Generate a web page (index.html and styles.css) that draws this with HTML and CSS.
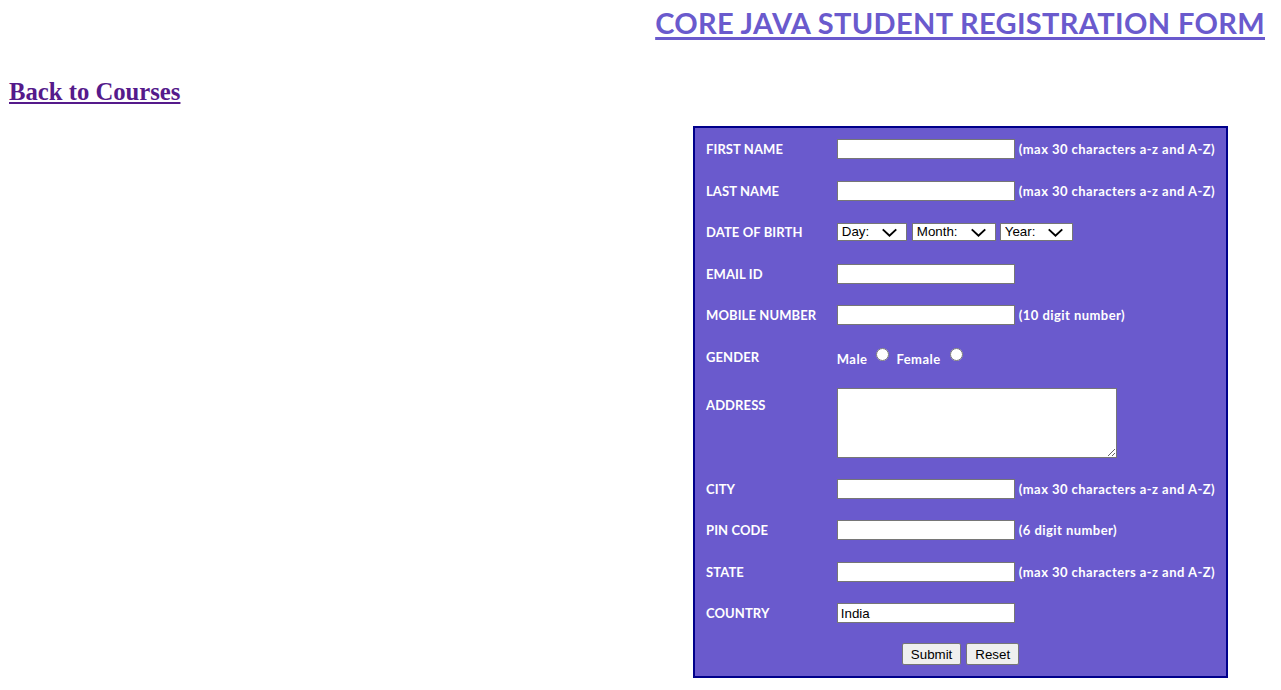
FILE: index.html
```html
<!DOCTYPE html>
<html lang="en">
<head>
<meta charset="utf-8">
<title>Core Java Student Registration Form</title>
<link rel="stylesheet" href="styles.css">
</head>
<body>
<h1 class="title"><a href="#" class="title-link">CORE JAVA STUDENT REGISTRATION FORM</a></h1>
<div class="main">
  <div class="left">
    <h2 class="back"><a href="#" class="back-link">Back to Courses</a></h2>
  </div>
  <div class="right">
    <form class="reg">
      <table class="reg-table">
        <tr>
          <td class="lbl">FIRST NAME</td>
          <td class="fld"><input type="text" class="txt"> <span class="note">(max 30 characters a-z and A-Z)</span></td>
        </tr>
        <tr>
          <td class="lbl">LAST NAME</td>
          <td class="fld"><input type="text" class="txt"> <span class="note">(max 30 characters a-z and A-Z)</span></td>
        </tr>
        <tr>
          <td class="lbl">DATE OF BIRTH</td>
          <td class="fld">
            <select class="sel sel-day"><option>Day:</option></select>
            <select class="sel sel-month"><option>Month:</option></select>
            <select class="sel sel-year"><option>Year:</option></select>
          </td>
        </tr>
        <tr>
          <td class="lbl">EMAIL ID</td>
          <td class="fld"><input type="text" class="txt"></td>
        </tr>
        <tr>
          <td class="lbl">MOBILE NUMBER</td>
          <td class="fld"><input type="text" class="txt"> <span class="note">(10 digit number)</span></td>
        </tr>
        <tr>
          <td class="lbl">GENDER</td>
          <td class="fld gender"><span class="note">Male</span> <input type="radio" name="g" class="rad"> <span class="note">Female</span> <input type="radio" name="g" class="rad"></td>
        </tr>
        <tr>
          <td class="lbl lbl-top">ADDRESS</td>
          <td class="fld"><textarea class="area"></textarea></td>
        </tr>
        <tr>
          <td class="lbl">CITY</td>
          <td class="fld"><input type="text" class="txt"> <span class="note">(max 30 characters a-z and A-Z)</span></td>
        </tr>
        <tr>
          <td class="lbl">PIN CODE</td>
          <td class="fld"><input type="text" class="txt"> <span class="note">(6 digit number)</span></td>
        </tr>
        <tr>
          <td class="lbl">STATE</td>
          <td class="fld"><input type="text" class="txt"> <span class="note">(max 30 characters a-z and A-Z)</span></td>
        </tr>
        <tr>
          <td class="lbl">COUNTRY</td>
          <td class="fld"><input type="text" class="txt" value="India"></td>
        </tr>
        <tr>
          <td class="btns" colspan="2"><button type="button" class="btn">Submit</button> <button type="reset" class="btn">Reset</button></td>
        </tr>
      </table>
    </form>
  </div>
</div>
</body>
</html>
```

FILE: styles.css
```css
html, body {
  margin: 0;
  padding: 0;
  background: #ffffff;
}

body {
  font-family: "Liberation Serif", serif;
}

.title {
  margin: 0;
  padding: 3px 16px 0 0;
  text-align: right;
  font-family: Lato, "Open Sans", sans-serif;
  font-size: 29px;
  font-weight: 700;
  letter-spacing: 0.35px;
  line-height: 40px;
}

.title-link {
  color: #6a5acd;
  text-decoration: underline;
  text-decoration-thickness: 3px;
  text-underline-offset: 3px;
}

.main {
  display: grid;
  grid-template-columns: 640px 1fr;
}

.back {
  margin: 35px 0 0 9px;
  font-family: "Liberation Serif", serif;
  font-size: 24.7px;
  font-weight: 700;
  line-height: 28px;
}

.back-link {
  color: #551a8b;
}

.right {
  display: flex;
  justify-content: center;
  padding-top: 83px;
}

.reg {
  margin: 0;
}

.reg-table {
  width: 535px;
  box-sizing: border-box;
  border: 2px solid #00008b;
  background: #6a5acd;
  border-collapse: separate;
  border-spacing: 0;
  padding: 0.25px 11px 0 11px;
}

.reg-table td {
  padding: 10.75px 0;
  vertical-align: middle;
  height: 20px;
}

.lbl {
  width: 131px;
  color: #ffffff;
  font-family: Lato, "Open Sans", sans-serif;
  font-size: 13px;
  font-weight: 700;
  letter-spacing: 0.1px;
  white-space: nowrap;
}

.lbl-top {
  vertical-align: top !important;
}

.reg-table td.lbl-top {
  padding-top: 20px;
}

.fld {
  white-space: nowrap;
  font-size: 0;
}

.note {
  color: #ffffff;
  font-family: Lato, "Open Sans", sans-serif;
  font-size: 13px;
  font-weight: 700;
  letter-spacing: 0.45px;
  vertical-align: middle;
  margin-left: 4px;
}

.txt {
  box-sizing: border-box;
  width: 178px;
  height: 20px;
  margin: 0;
  padding: 1px 3px;
  border: 1px solid #767676;
  background: #ffffff;
  font-family: "Liberation Sans", Arial, sans-serif;
  font-size: 13.33px;
  color: #000000;
  vertical-align: middle;
}

.sel {
  box-sizing: border-box;
  height: 18px;
  margin: 0 5px 0 0;
  padding: 0 0 0 4px;
  border: 1px solid #767676;
  border-radius: 0;
  background-color: #ffffff;
  background-image: url("data:image/svg+xml,%3Csvg xmlns='http://www.w3.org/2000/svg' width='18' height='10' viewBox='0 0 18 10'%3E%3Cpath d='M1.5 1.5 L9 8.5 L16.5 1.5' fill='none' stroke='%23000' stroke-width='2.2'/%3E%3C/svg%3E");
  background-repeat: no-repeat;
  background-position: right 8px center;
  background-size: 17px 9px;
  -webkit-appearance: none;
  appearance: none;
  font-family: "Liberation Sans", Arial, sans-serif;
  font-size: 13.33px;
  line-height: 16px;
  color: #000000;
  vertical-align: middle;
}

.sel-day { width: 70px; }
.sel-month { width: 84px; margin-right: 4px; }
.sel-year { width: 73px; }

.rad {
  width: 13px;
  height: 13px;
  margin: 0 3px 0 9px;
  vertical-align: top;
  position: relative;
  top: -1px;
}

.gender .note {
  margin-left: 4px;
  vertical-align: baseline;
  position: relative;
  top: 2px;
}

.gender .note:first-child {
  margin-left: 0;
}

.area {
  box-sizing: border-box;
  width: 280px;
  height: 70px;
  margin: -0.5px 0 -0.5px 0;
  padding: 2px;
  border: 1px solid #767676;
  background: #ffffff;
  display: block;
  font-family: "Liberation Mono", monospace;
  font-size: 13.33px;
}

.reg-table td.btns {
  text-align: center;
  padding: 9.5px 0 11px 0;
  font-size: 0;
}

.btn {
  box-sizing: border-box;
  height: 22px;
  margin: 0 2.5px;
  padding: 1px 8px;
  border: 1px solid #767676;
  border-radius: 2px;
  background: #efefef;
  font-family: "Liberation Sans", Arial, sans-serif;
  font-size: 13.33px;
  color: #000000;
}
```
